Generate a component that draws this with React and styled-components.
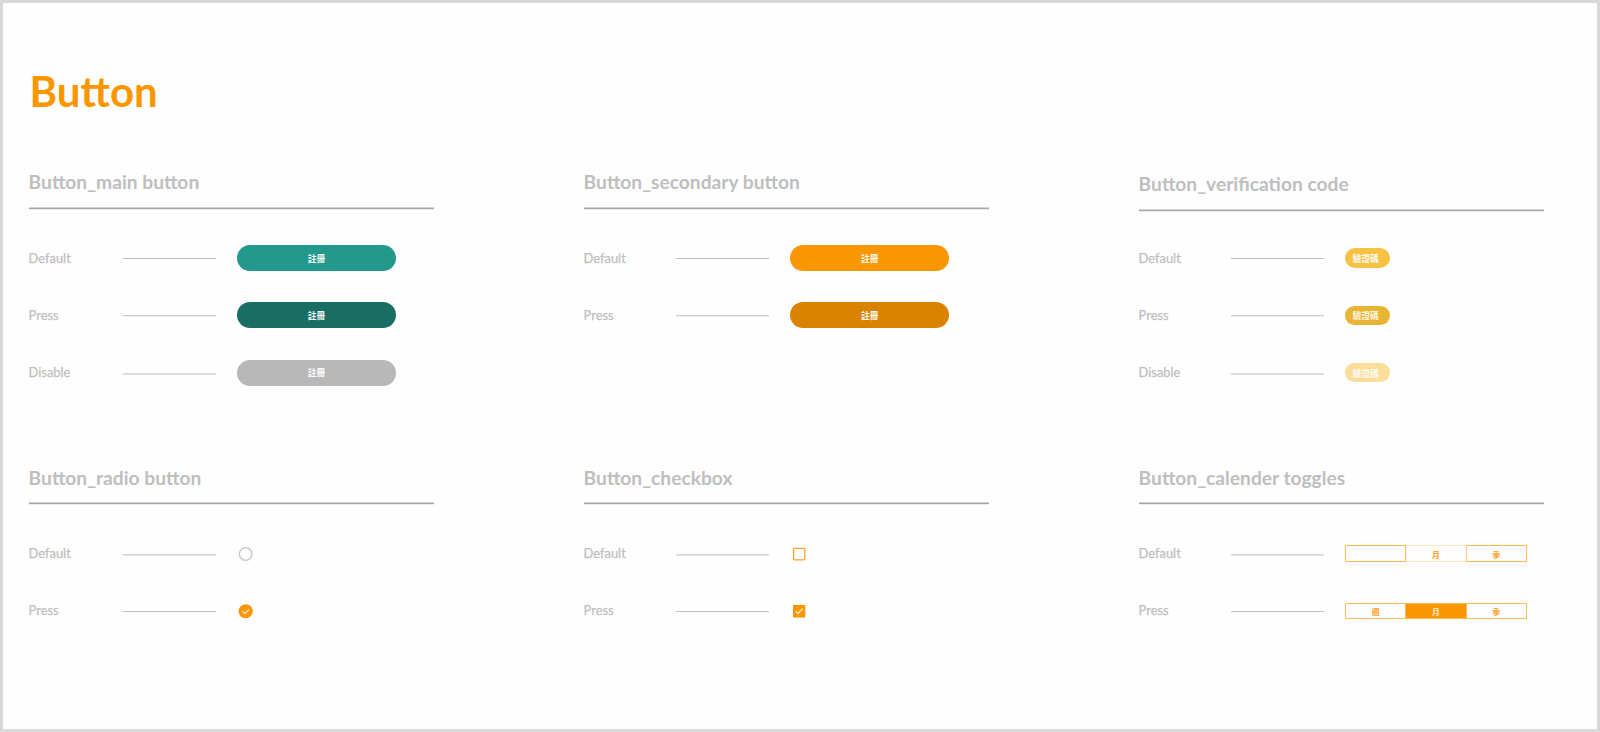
import React from "react";
import styled, { createGlobalStyle } from "styled-components";

const Global = createGlobalStyle`
  * { box-sizing: border-box; }
  body { margin: 0; background: #fefefe; }
`;

const Page = styled.main`
  width: 1600px;
  height: 732px;
  border: 3px solid #d8d8d8;
  background: #fefefe;
  padding: 59px 0 0 25.6px;
  font-family: Lato, "Noto Sans CJK TC", sans-serif;
  color: #bebebe;
  overflow: hidden;
`;

const Title = styled.h1`
  margin: 0 0 53px;
  padding-left: 1px;
  height: 58px;
  font-size: 42px;
  line-height: 58px;
  font-weight: 700;
  color: #fa9600;
`;

const Board = styled.div`
  display: grid;
  grid-template-columns: repeat(3, 405.5px);
  grid-template-rows: 295px auto;
  column-gap: 149.5px;
`;

const Section = styled.section`
  display: flex;
  flex-direction: column;
  padding-top: ${(p) => p.$drop || 0}px;
`;

const Heading = styled.h2`
  margin: 0;
  height: 34.4px;
  font-size: 19.2px;
  line-height: ${(p) => p.$line || 18}px;
  font-weight: 700;
`;

const Rule = styled.svg`
  display: block;
  width: 100%;
  height: 3px;
`;

const States = styled.div`
  display: flex;
  flex-direction: column;
  padding-top: ${(p) => p.$top}px;
`;

const State = styled.div`
  display: grid;
  grid-template-columns: ${(p) => p.$label}px 93px 1fr;
  align-items: center;
  height: 57.2px;
`;

const Label = styled.span`
  font-size: 12.9px;
  line-height: 16px;
  padding-bottom: 1px;
  -webkit-text-stroke: 0.25px #bebebe;
`;

const Leader = styled.svg`
  display: block;
  width: 93px;
  height: 4px;
`;

const Control = styled.div`
  display: flex;
  padding-left: ${(p) => p.$inset}px;
`;

const Button = styled.button`
  width: ${(p) => (p.$small ? 44.7 : 159.5)}px;
  height: ${(p) => (p.$small ? 19.4 : 26)}px;
  padding: ${(p) => (p.$small ? "2px 3.6px 0 0" : "1px 0 0 0")};
  border: 0;
  border-radius: 13px;
  background: ${(p) => p.$color};
  color: ${(p) => p.$ink || "#fff"};
  font: 700 8.7px/12px "Noto Sans CJK TC", sans-serif;
  display: flex;
  align-items: center;
  justify-content: center;
`;

const Mark = styled.svg`
  display: block;
  width: 16px;
  height: 16px;
`;

const ToggleGroup = styled.div`
  display: flex;
  width: 182px;
  height: 16.4px;
  border-radius: 1px;
`;

const Toggle = styled.button`
  flex: 1 1 0;
  padding: 2px 0 0;
  border: 1px solid ${(p) => (p.$faint ? "#fee3bb" : "#fcb95a")};
  border-left-width: ${(p) => (p.$first ? 1 : 0)}px;
  border-right-color: ${(p) => (p.$faint ? "#fccb85" : "#fcb95a")};
  border-radius: ${(p) => (p.$first ? "1px 0 0 1px" : p.$last ? "0 1px 1px 0" : 0)};
  background: ${(p) => (p.$active ? "#fa9600" : "transparent")};
  color: ${(p) => (p.$active ? "#ffe3b8" : "#fba936")};
  font: 900 7.8px/12px "Noto Sans CJK TC", sans-serif;
  display: flex;
  align-items: center;
  justify-content: center;
`;

function Radio({ checked }) {
  return (
    <Mark viewBox="0 0 16 16" fill="none">
      {checked ? (
        <>
          <circle cx="7.7" cy="8.2" r="7" fill="#fa9600" />
          <path d="M4.4 8.3 6.8 10.5 11 6.4" stroke="#ffe9c8" strokeWidth="1.4" />
        </>
      ) : (
        <circle cx="7.7" cy="8" r="6.3" stroke="#c4c4c4" strokeWidth="1.3" />
      )}
    </Mark>
  );
}

function Checkbox({ checked }) {
  return (
    <Mark viewBox="0 0 16 16" fill="none">
      {checked ? (
        <>
          <rect x="2" y="2" width="12.3" height="12.4" rx="1.2" fill="#fa9600" />
          <path d="M4.7 8.3 7 10.5 11.7 5.8" stroke="#ffe9c8" strokeWidth="1.3" />
        </>
      ) : (
        <rect x="2.6" y="2.4" width="11.2" height="11.4" rx="0.8" stroke="#fba42a" strokeWidth="1.3" />
      )}
    </Mark>
  );
}

function Toggles({ first, active }) {
  return (
    <ToggleGroup>
      <Toggle $first>{first}</Toggle>
      <Toggle $active={active} $faint={!active}>月</Toggle>
      <Toggle $last>季</Toggle>
    </ToggleGroup>
  );
}

const UPPER_LEADERS = [2, 2.2, 2.5];
const LOWER_LEADERS = [2.4, 2.1];

const GROUPS = [
  {
    title: "Button_main button", label: 94.1, inset: 21, top: 19.2, leaders: UPPER_LEADERS,
    states: [
      ["Default", <Button $color="#23988d">註冊</Button>],
      ["Press", <Button $color="#186e65">註冊</Button>],
      ["Disable", <Button $color="#b8b8b8">註冊</Button>],
    ],
  },
  {
    title: "Button_secondary button", label: 92.6, inset: 20.8, top: 19.2, leaders: UPPER_LEADERS,
    states: [
      ["Default", <Button $color="#fa9600">註冊</Button>],
      ["Press", <Button $color="#da8300">註冊</Button>],
    ],
  },
  {
    title: "Button_verification code", label: 92.6, inset: 20.8, top: 17.4, drop: 1.8, leaders: UPPER_LEADERS,
    states: [
      ["Default", <Button $small $color="#f6c244" $ink="#fffaf0">驗證碼</Button>],
      ["Press", <Button $small $color="#e8b433" $ink="#fff6e0">驗證碼</Button>],
      ["Disable", <Button $small $color="#fade9a" $ink="#fffaf0">驗證碼</Button>],
    ],
  },
  {
    title: "Button_radio button", label: 94.1, inset: 22.2, top: 19.7, line: 20, leaders: LOWER_LEADERS,
    states: [["Default", <Radio />], ["Press", <Radio checked />]],
  },
  {
    title: "Button_checkbox", label: 92.6, inset: 21.8, top: 19.7, line: 20, leaders: LOWER_LEADERS,
    states: [["Default", <Checkbox />], ["Press", <Checkbox checked />]],
  },
  {
    title: "Button_calender toggles", label: 92.6, inset: 20.8, top: 19.7, line: 20, leaders: LOWER_LEADERS,
    states: [["Default", <Toggles />], ["Press", <Toggles first="週" active />]],
  },
];

export default function App() {
  return (
    <>
      <Global />
      <Page>
        <Title>Button</Title>
        <Board>
          {GROUPS.map((g) => (
            <Section key={g.title} $drop={g.drop}>
              <Heading $line={g.line}>{g.title}</Heading>
              <Rule preserveAspectRatio="none" viewBox="0 0 400 3">
                <rect y="0.5" width="400" height="1.7" fill="#a6a6a6" />
              </Rule>
              <States $top={g.top}>
                {g.states.map(([name, control], i) => (
                  <State key={name} $label={g.label}>
                    <Label>{name}</Label>
                    <Leader viewBox="0 0 93 4">
                      <rect y={g.leaders[i]} width="93" height="1" fill="#bcbcbc" />
                    </Leader>
                    <Control $inset={g.inset}>{control}</Control>
                  </State>
                ))}
              </States>
            </Section>
          ))}
        </Board>
      </Page>
    </>
  );
}
